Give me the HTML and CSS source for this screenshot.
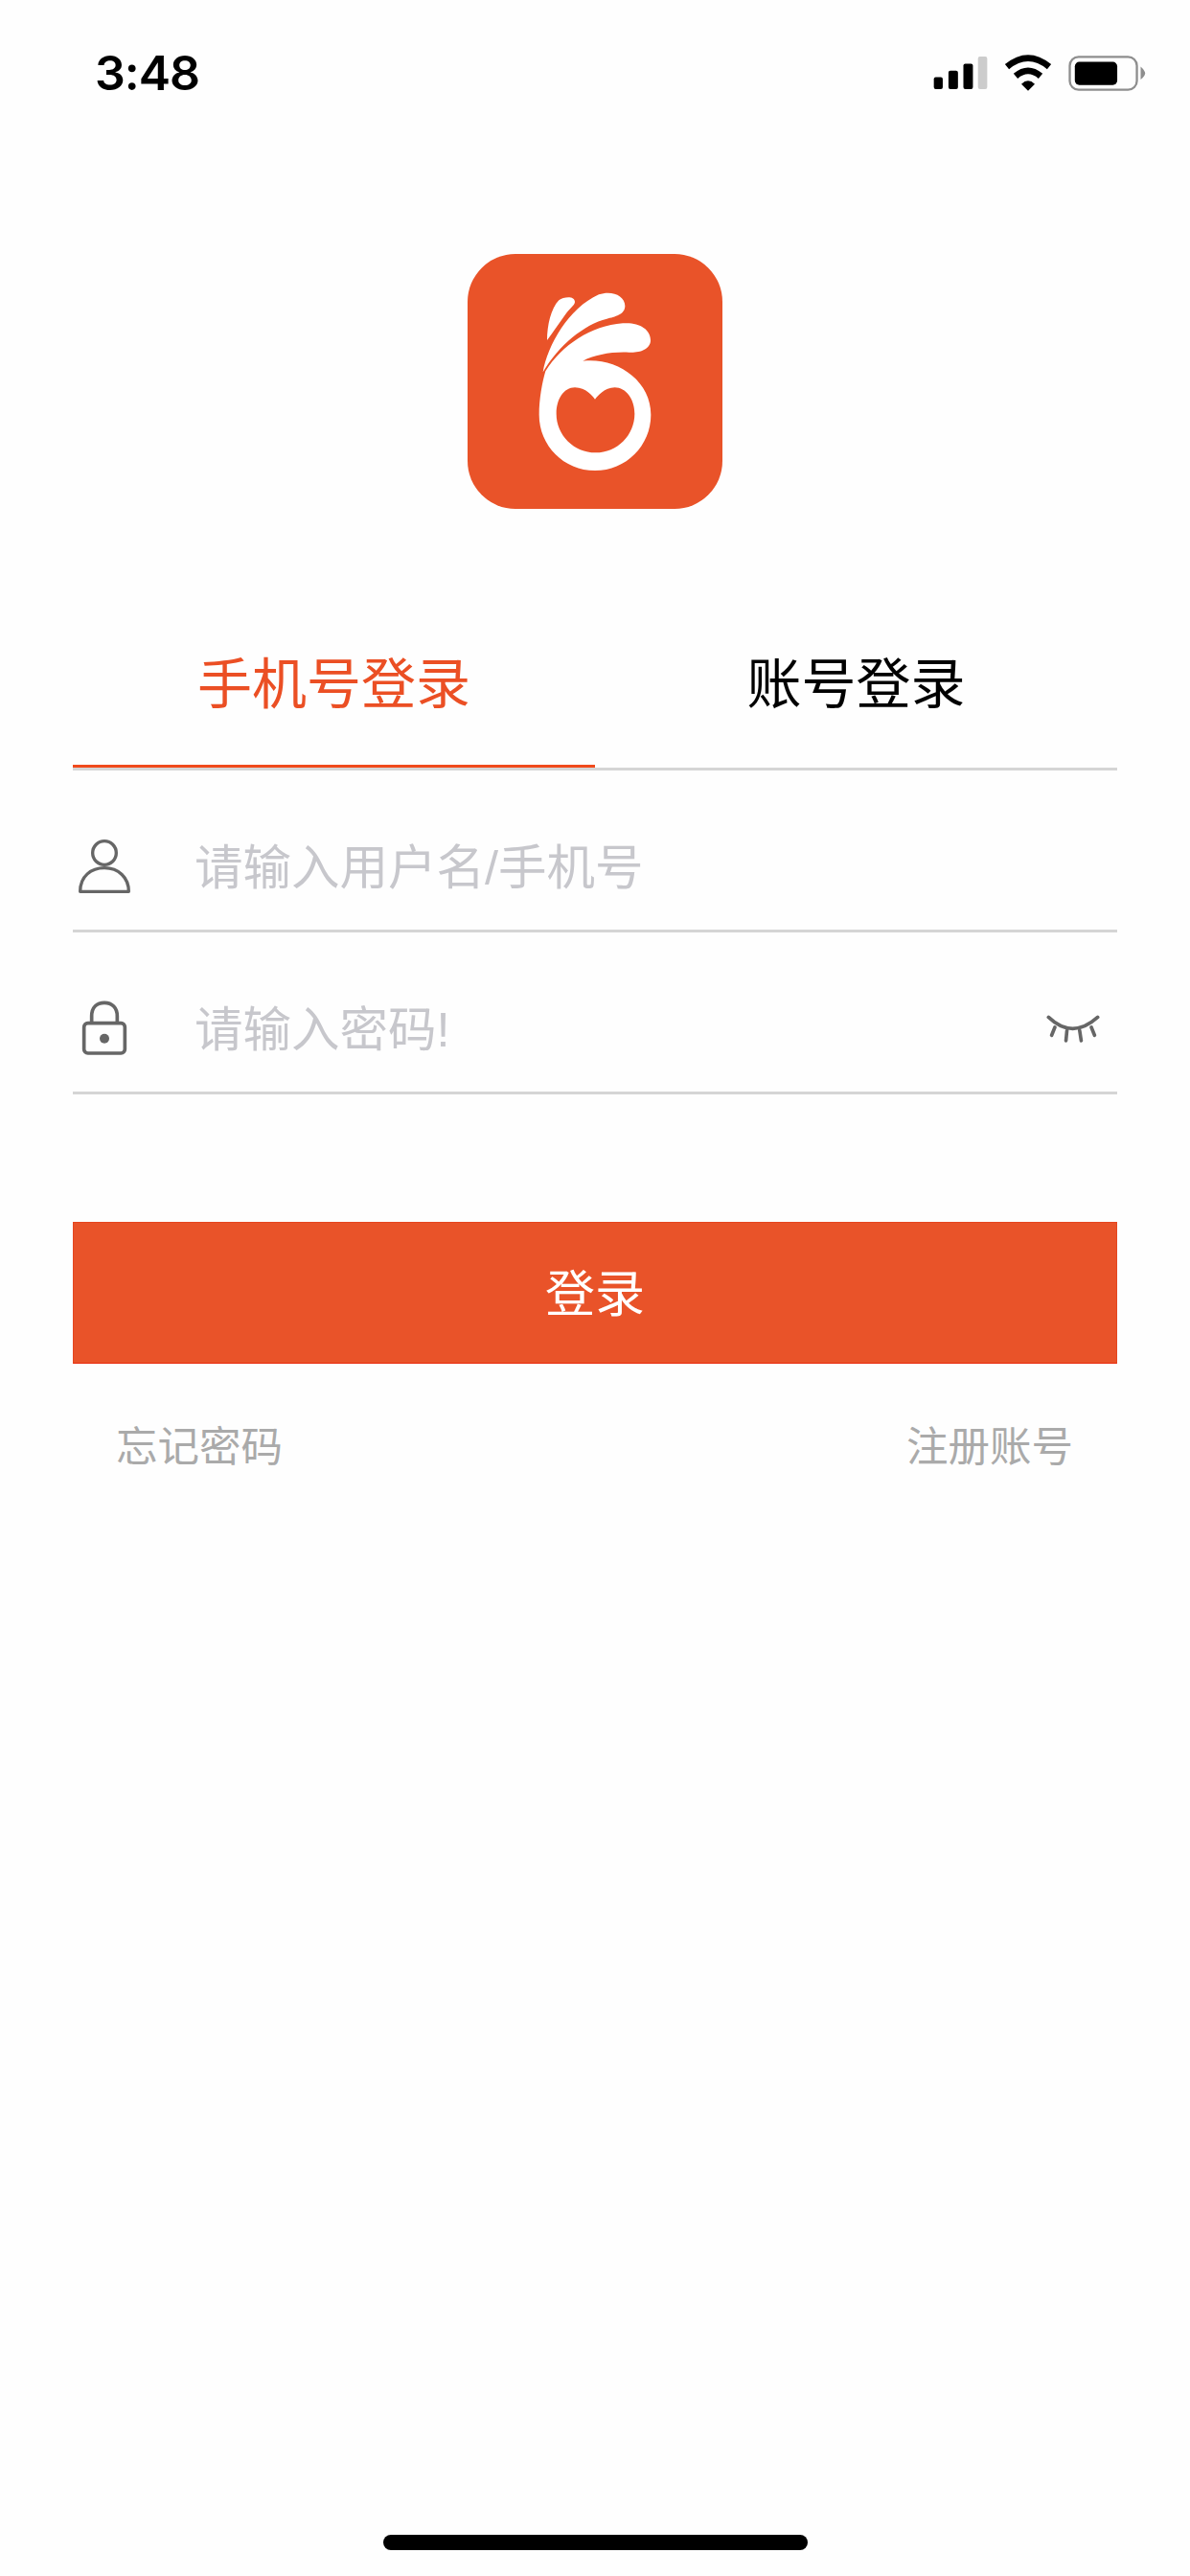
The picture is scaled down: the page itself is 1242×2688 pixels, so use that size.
FILE: index.html
```html
<!DOCTYPE html>
<html lang="zh-CN">
<head>
  <meta charset="UTF-8">
  <meta name="viewport" content="width=device-width, initial-scale=1.0">
  <title>登录</title>
  <link rel="stylesheet" href="styles.css">
</head>
<body>
  <div class="page">
    <div class="status-bar">
      <span class="time">3:48</span>
      <div class="status-icons">
        <svg class="signal" viewBox="70 55 172 107">
          <rect x="72" y="122" width="28" height="38" rx="6" fill="#000"/>
          <rect x="118" y="102" width="30" height="58" rx="6" fill="#000"/>
          <rect x="165" y="80" width="30" height="80" rx="6" fill="#000"/>
          <rect x="211" y="57" width="29" height="103" rx="6" fill="#ccc"/>
        </svg>
        <svg class="wifi" viewBox="288 50 156 114">
          <path d="M300 88Q366 34 432 88" fill="none" stroke="#000" stroke-width="20"/>
          <path d="M327 117Q366 84 405 117" fill="none" stroke="#000" stroke-width="20"/>
          <path d="M345 142Q366 122 387 142L366 163Z" fill="#000"/>
        </svg>
        <svg class="battery" viewBox="492 52 244 112">
          <rect x="496" y="56" width="212" height="104" rx="28" fill="none" stroke="#8e8e8e" stroke-width="7"/>
          <rect x="512" y="72" width="134" height="73" rx="14" fill="#000"/>
          <path d="M720 87Q734 100 734 108Q734 116 720 128Z" fill="#8e8e8e"/>
        </svg>
      </div>
    </div>

    <svg class="logo" viewBox="54 45 798 798">
      <rect x="54" y="45" width="798" height="798" rx="150" fill="#e95329"/>
      <path fill="#fff" d="M303 315C303 270 315 215 340 190C355 178 390 175 390 195C390 205 375 215 365 228C345 255 322 290 303 315Z"/>
      <path fill="#fff" d="M290 415C305 330 370 215 465 172C505 158 547 175 547 208C547 235 515 242 490 248C420 265 340 330 290 415Z"/>
      <path fill="#fff" fill-rule="evenodd" d="M298 412C350 330 440 270 540 262C590 258 627 280 627 315C627 345 590 355 560 353C510 350 450 360 415 380C520 368 628 440 628 548C628 645 550 723 453 723C356 723 278 645 278 548C278 500 288 445 298 412ZM453 500C445 490 425 463 390 463C355 463 332 500 332 545C332 612 387 667 455 667C523 667 577 612 577 545C577 500 550 463 515 463C482 463 462 490 453 500Z"/>
    </svg>

    <div class="login-box">
      <div class="tabs">
        <div class="tab active">手机号登录</div>
        <div class="tab">账号登录</div>
      </div>

      <div class="field">
        <svg class="field-icon" viewBox="47 61 198 198">
          <circle cx="146" cy="118" r="37" fill="none" stroke="#666" stroke-width="10"/>
          <path d="M70 239C70 190 105 165 146 165C190 165 222 195 222 239Z" fill="none" stroke="#666" stroke-width="10" stroke-linejoin="round"/>
        </svg>
        <span class="placeholder">请输入用户名/手机号</span>
      </div>

      <div class="field">
        <svg class="field-icon" viewBox="49 569 198 198">
          <rect x="84" y="652" width="128" height="94" rx="12" fill="none" stroke="#666" stroke-width="11"/>
          <path d="M108 652V630C108 602 125 588 148 588C172 588 188 604 188 630V652" fill="none" stroke="#666" stroke-width="11"/>
          <circle cx="148" cy="700" r="15" fill="#666"/>
        </svg>
        <span class="placeholder">请输入密码!</span>
        <svg class="eye" viewBox="120 108 175 90">
          <path d="M130 118Q205 190 285 118M150 150L140 175M188 160L185 192M228 160L233 192M265 150L275 175" fill="none" stroke="#666" stroke-width="11" stroke-linecap="round"/>
        </svg>
      </div>

      <button class="login-btn">登录</button>

      <div class="links">
        <span>忘记密码</span>
        <span>注册账号</span>
      </div>
    </div>

    <div class="home-bar"></div>
  </div>
</body>
</html>
```

FILE: styles.css
```css
*{
  box-sizing: border-box;
}
body{
  margin: 0;
  background: #fefefe;
  font-family: "Liberation Sans", "Noto Sans CJK SC", sans-serif;
}
.page{
  display: flex;
  flex-direction: column;
  height: 2688px;
}
.status-bar{
  display: flex;
  justify-content: space-between;
  align-items: center;
  height: 152px;
  padding: 0 46px 0 99px;
  margin-bottom: 113px;
}
.time{
  font-family: Inter, sans-serif;
  font-size: 50px;
  font-weight: 600;
  letter-spacing: -1px;
  color: #000;
}
.status-icons{
  display: flex;
  align-items: center;
  gap: 16px;
}
.signal{
  width: 57px;
  height: 36px;
}
.wifi{
  width: 52px;
  height: 38px;
}
.battery{
  width: 81px;
  height: 37px;
}
.logo{
  display: block;
  width: 266px;
  height: 266px;
  margin: 0 auto;
  flex: none;
}
.login-box{
  margin: 0 76px;
}
.tabs{
  display: flex;
  margin-top: 100px;
  border-bottom: 3px solid #d5d5d5;
}
.tab{
  flex: 1;
  height: 170px;
  padding-top: 48px;
  font-size: 57px;
  line-height: 70px;
  text-align: center;
  color: #000;
  border-bottom: 3px solid transparent;
}
.tab.active{
  color: #eb4f24;
  border-bottom-color: #f04a1c;
}
.field{
  display: flex;
  align-items: center;
  height: 169px;
  padding-top: 34px;
  border-bottom: 3px solid #d5d5d5;
}
.field-icon{
  width: 66px;
  height: 66px;
  margin-right: 61px;
  flex: none;
}
.placeholder{
  margin-top: -6px;
  font-size: 50.5px;
  color: #c7c7cc;
}
.eye{
  width: 58px;
  height: 30px;
  margin-left: auto;
  margin-right: 17px;
}
.login-btn{
  display: block;
  width: 100%;
  height: 148px;
  margin-top: 133px;
  padding-bottom: 6px;
  background: #e95329;
  border: 1px solid #e6451f;
  border-bottom-color: #e82a0c;
  color: #fff;
  font-family: inherit;
  font-size: 52px;
}
.links{
  display: flex;
  justify-content: space-between;
  padding: 0 46px 0 45px;
  margin-top: 52px;
  font-size: 43.5px;
  color: #aaa;
}
.home-bar{
  width: 443px;
  height: 16px;
  margin: auto auto 27px;
  border-radius: 8px;
  background: #000;
}
```
